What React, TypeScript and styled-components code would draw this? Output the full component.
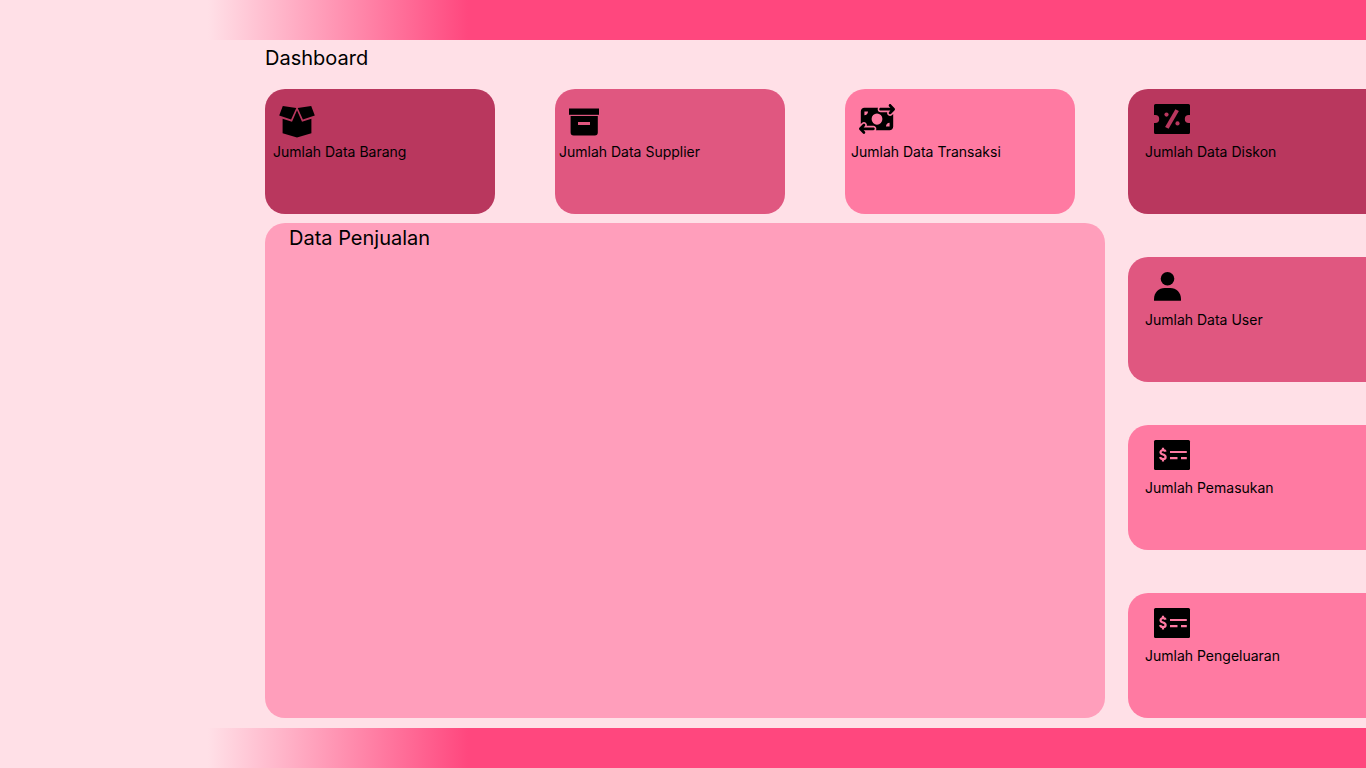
import React from "react";
import styled, { createGlobalStyle } from "styled-components";
import { FaMoneyBillTransfer } from "react-icons/fa6";

const GlobalStyle = createGlobalStyle`
  *, *::before, *::after { box-sizing: border-box; }
  body {
    margin: 0;
    background: #ffe0e7;
    color: #000;
    font-family: Inter, "Liberation Sans", sans-serif;
  }
`;

const tones = {
  deep: "#b9375e",
  medium: "#e05780",
  bright: "#ff7aa2",
};

type Tone = keyof typeof tones;

const Page = styled.div`
  display: flex;
  flex-direction: column;
  min-height: 100vh;
`;

const bar = `
  flex: none;
  height: 40px;
  background: linear-gradient(to right, #ffe0e7 208px, #ff477e 468px);
`;

const TopBar = styled.header`
  ${bar}
`;

const BottomBar = styled.footer`
  ${bar}
`;

const Main = styled.main`
  flex: 1;
  display: flex;
  flex-direction: column;
  padding: 0 0 10px 265px;
`;

const PageTitle = styled.h1`
  margin: 0;
  padding: 6px 0 19px;
  font-size: 20px;
  line-height: 24px;
  font-weight: 400;
`;

const Board = styled.div`
  flex: 1;
  display: grid;
  grid-template-columns: minmax(0, 1fr) 238px;
  column-gap: 23px;
`;

const Primary = styled.div`
  display: flex;
  flex-direction: column;
  gap: 9px;
`;

const CardRow = styled.div`
  display: grid;
  grid-template-columns: repeat(3, minmax(0, 1fr));
  gap: 60px;
  padding-right: 30px;
`;

const CardColumn = styled.aside`
  display: flex;
  flex-direction: column;
  justify-content: space-between;
  gap: 16px;
`;

const Card = styled.section<{ $tone: Tone; $inset: number; $edge?: boolean }>`
  height: 125px;
  padding: 15px 0 0 ${(p) => p.$inset}px;
  border-radius: ${(p) => (p.$edge ? "20px 0 0 20px" : "20px")};
  background: ${(p) => tones[p.$tone]};
`;

const IconSlot = styled.div<{ $indent: number }>`
  height: 39px;
  padding-left: ${(p) => p.$indent}px;

  svg {
    display: block;
    overflow: visible;
  }
`;

const TransferGlyph = styled(FaMoneyBillTransfer)`
  width: 36px;
  height: 30px;
`;

const CardTitle = styled.h2`
  margin: 0;
  font-size: 14px;
  line-height: 17px;
  font-weight: 400;
  white-space: nowrap;
`;

const Panel = styled.section`
  flex: 1;
  min-height: 240px;
  padding: 3px 24px;
  border-radius: 20px;
  background: #ff9ebb;
`;

const PanelTitle = styled.h2`
  margin: 0;
  font-size: 20px;
  line-height: 24px;
  font-weight: 400;
`;

const BoxIcon = () => (
  <svg width="36" height="34" viewBox="0 0 36 34" aria-hidden="true">
    <path d="M3.8 2.1 L17.3 4.1 L12.1 15.6 L0.2 11.4 Z M32.2 2.1 L18.7 4.1 L23.9 15.6 L35.8 11.4 Z" />
    <path d="M18 6.2 L23 17.8 L32.4 14.8 V29.2 L18 33.4 L3.6 29.2 V14.8 L13 17.8 Z" />
  </svg>
);

const ArchiveIcon = () => (
  <svg width="30" height="32" viewBox="0 0 30 32" aria-hidden="true">
    <path d="M0 4.5h30v6.3H0z" />
    <path
      fillRule="evenodd"
      d="M1.6 12h27.2v16.4a3 3 0 0 1-3 3H4.6a3 3 0 0 1-3-3z M9 18v3h12v-3z"
    />
  </svg>
);

const TransferIcon = () => (
  <TransferGlyph preserveAspectRatio="none" aria-hidden="true" />
);

const DiscountIcon = () => (
  <svg width="36" height="30" viewBox="0 0 36 30" aria-hidden="true">
    <path
      fillRule="evenodd"
      d="M1.5 0h33A1.5 1.5 0 0 1 36 1.5V11h-1.2a4 4 0 0 0 0 8H36v9.500a1.500 1.500 0 0 1-1.500 1.500h-33A1.500 1.500 0 0 1 0 28.500V19h1.200a4 4 0 0 0 0-8H0V1.500A1.500 1.500 0 0 1 1.500 0z"
    />
    <g fill={tones.deep}>
      <circle cx="12.5" cy="10.600" r="2.100" />
      <circle cx="23.5" cy="19.400" r="2.100" />
      <path d="M21.400 5.200L24.900 7.100L14.600 24.800L11.100 22.900z" />
    </g>
  </svg>
);

const UserIcon = () => (
  <svg width="27" height="30" viewBox="0 0 27 30" aria-hidden="true">
    <circle cx="13.5" cy="6.800" r="6.800" />
    <path d="M0 28.700V27C0 20.500 4.800 16 10.600 16h5.800C22.200 16 27 20.500 27 27v1.700z" />
  </svg>
);

const MoneyCheckIcon = () => (
  <svg width="36" height="30" viewBox="0 0 36 30" aria-hidden="true">
    <rect width="36" height="30" rx="1.500" />
    <g fill="none" stroke={tones.bright} strokeWidth="2.200">
      <path d="M16 12h16.800M16 18.200h7.500M27 18.200h5.800" />
      <path d="M11.700 11.700C11.300 10.600 10.300 10.200 9 10.200C7.500 10.200 6.500 11 6.500 12.200C6.500 15.200 11.600 13.800 11.600 16.900C11.600 18.300 10.400 19 9 19C7.500 19 6.400 18.300 6.100 17M9 7.700v2.500M9 19v2.500" />
    </g>
  </svg>
);

type CardData = {
  title: string;
  tone: Tone;
  icon: React.ReactNode;
  inset: number;
  indent: number;
};

const topCards: CardData[] = [
  { title: "Jumlah Data Barang", tone: "deep", icon: <BoxIcon />, inset: 8, indent: 6 },
  { title: "Jumlah Data Supplier", tone: "medium", icon: <ArchiveIcon />, inset: 4, indent: 10 },
  { title: "Jumlah Data Transaksi", tone: "bright", icon: <TransferIcon />, inset: 6, indent: 8 },
];

const sideCards: CardData[] = [
  { title: "Jumlah Data Diskon", tone: "deep", icon: <DiscountIcon />, inset: 17, indent: 9 },
  { title: "Jumlah Data User", tone: "medium", icon: <UserIcon />, inset: 17, indent: 9 },
  { title: "Jumlah Pemasukan", tone: "bright", icon: <MoneyCheckIcon />, inset: 17, indent: 9 },
  { title: "Jumlah Pengeluaran", tone: "bright", icon: <MoneyCheckIcon />, inset: 17, indent: 9 },
];

const StatCard = ({ card, edge }: { card: CardData; edge?: boolean }) => (
  <Card $tone={card.tone} $inset={card.inset} $edge={edge}>
    <IconSlot $indent={card.indent}>{card.icon}</IconSlot>
    <CardTitle>{card.title}</CardTitle>
  </Card>
);

export default function App() {
  return (
    <Page>
      <GlobalStyle />
      <TopBar />
      <Main>
        <PageTitle>Dashboard</PageTitle>
        <Board>
          <Primary>
            <CardRow>
              {topCards.map((card) => (
                <StatCard key={card.title} card={card} />
              ))}
            </CardRow>
            <Panel>
              <PanelTitle>Data Penjualan</PanelTitle>
            </Panel>
          </Primary>
          <CardColumn>
            {sideCards.map((card) => (
              <StatCard key={card.title} card={card} edge />
            ))}
          </CardColumn>
        </Board>
      </Main>
      <BottomBar />
    </Page>
  );
}
